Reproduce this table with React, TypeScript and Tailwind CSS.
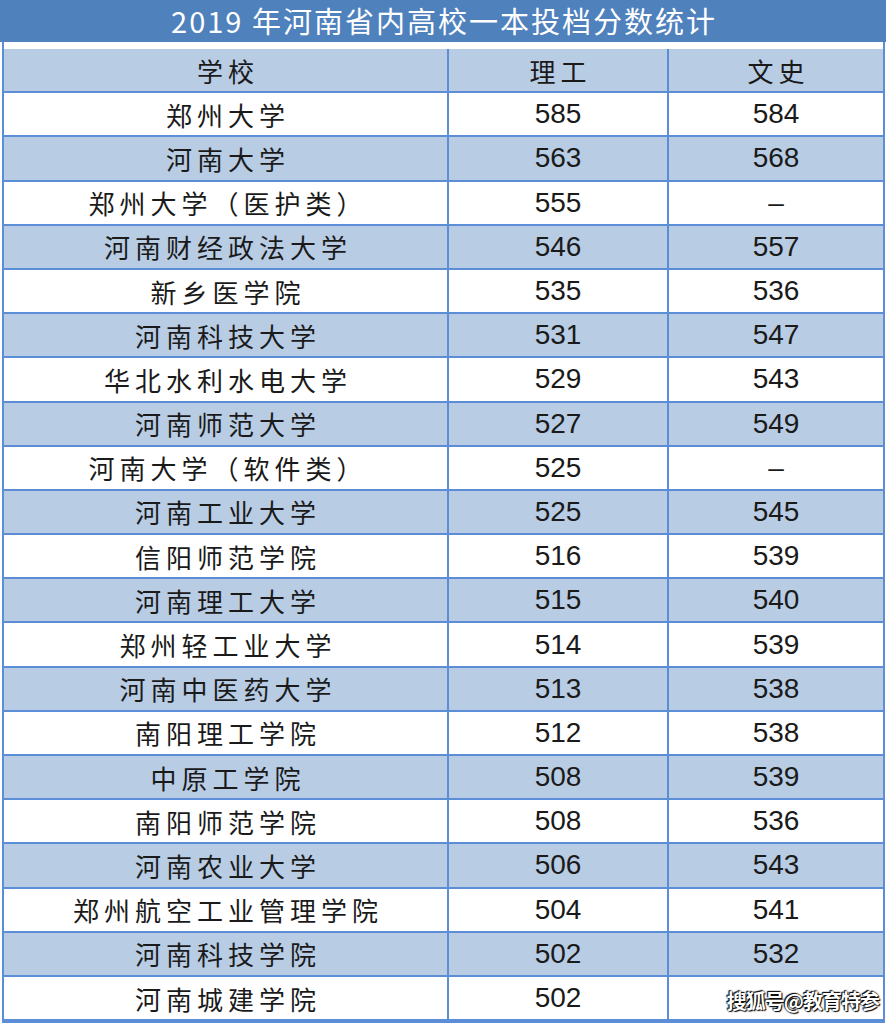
import React from 'react';

type Row = {
  school: string;
  science: string;
  arts: string;
};

const rows: Row[] = [
  { school: '郑州大学', science: '585', arts: '584' },
  { school: '河南大学', science: '563', arts: '568' },
  { school: '郑州大学（医护类）', science: '555', arts: '–' },
  { school: '河南财经政法大学', science: '546', arts: '557' },
  { school: '新乡医学院', science: '535', arts: '536' },
  { school: '河南科技大学', science: '531', arts: '547' },
  { school: '华北水利水电大学', science: '529', arts: '543' },
  { school: '河南师范大学', science: '527', arts: '549' },
  { school: '河南大学（软件类）', science: '525', arts: '–' },
  { school: '河南工业大学', science: '525', arts: '545' },
  { school: '信阳师范学院', science: '516', arts: '539' },
  { school: '河南理工大学', science: '515', arts: '540' },
  { school: '郑州轻工业大学', science: '514', arts: '539' },
  { school: '河南中医药大学', science: '513', arts: '538' },
  { school: '南阳理工学院', science: '512', arts: '538' },
  { school: '中原工学院', science: '508', arts: '539' },
  { school: '南阳师范学院', science: '508', arts: '536' },
  { school: '河南农业大学', science: '506', arts: '543' },
  { school: '郑州航空工业管理学院', science: '504', arts: '541' },
  { school: '河南科技学院', science: '502', arts: '532' },
  { school: '河南城建学院', science: '502', arts: '' },
];

const cjk = "font-['Noto_Sans_CJK_SC',sans-serif]";
const num = "font-['Liberation_Sans',Arial,sans-serif]";

function TableRow({ row, shaded }: { row: Row; shaded: boolean }) {
  return (
    <div
      className={`grid grid-cols-[445px_220px_1fr] h-[44.2px] border-b-2 border-[#5b8ed6] ${
        shaded ? 'bg-[#b8cce4]' : 'bg-white'
      }`}
    >
      <div
        className={`flex items-center justify-center border-r-2 border-[#5b8ed6] text-[26px] tracking-[5px] pl-[5px] text-[#1a1a1a] ${cjk}`}
      >
        {row.school}
      </div>
      <div
        className={`flex items-center justify-center border-r-2 border-[#5b8ed6] text-[28px] text-[#1a1a1a] ${num}`}
      >
        {row.science}
      </div>
      <div className={`flex items-center justify-center text-[28px] text-[#1a1a1a] ${num}`}>
        {row.arts}
      </div>
    </div>
  );
}

export default function App() {
  return (
    <div className="relative w-[889px] h-[1023px] bg-white overflow-hidden">
      {/* Title */}
      <div
        className={`w-[886px] h-[42px] bg-[#4f81bd] flex items-center justify-center text-white text-[29px] tracking-[2px] pl-[2px] ${cjk}`}
      >
        2019 年河南省内高校一本投档分数统计
      </div>

      {/* Table */}
      <div className="ml-[2px] w-[883px] border-x-2 border-b-2 border-[#5b8ed6] pt-[7px] bg-white">
        <div className="grid grid-cols-[445px_220px_1fr] h-[44.2px] border-b-2 border-[#5b8ed6] bg-[#b8cce4]">
          <div
            className={`flex items-center justify-center border-r-2 border-[#5b8ed6] text-[26px] tracking-[5px] pl-[5px] text-[#1a1a1a] ${cjk}`}
          >
            学校
          </div>
          <div
            className={`flex items-center justify-center border-r-2 border-[#5b8ed6] text-[26px] tracking-[5px] pl-[5px] text-[#1a1a1a] ${cjk}`}
          >
            理工
          </div>
          <div
            className={`flex items-center justify-center text-[26px] tracking-[5px] pl-[5px] text-[#1a1a1a] ${cjk}`}
          >
            文史
          </div>
        </div>
        {rows.map((row, i) => (
          <TableRow key={i} row={row} shaded={i % 2 === 1} />
        ))}
      </div>

      {/* Watermark */}
      <div
        className={`absolute right-[10px] bottom-[7px] text-white text-[20px] font-bold tracking-[-1px] ${cjk} [text-shadow:0_0_2px_#000,1px_1px_1px_#000,-1px_-1px_1px_#000]`}
      >
        搜狐号@教育特参
      </div>
    </div>
  );
}
